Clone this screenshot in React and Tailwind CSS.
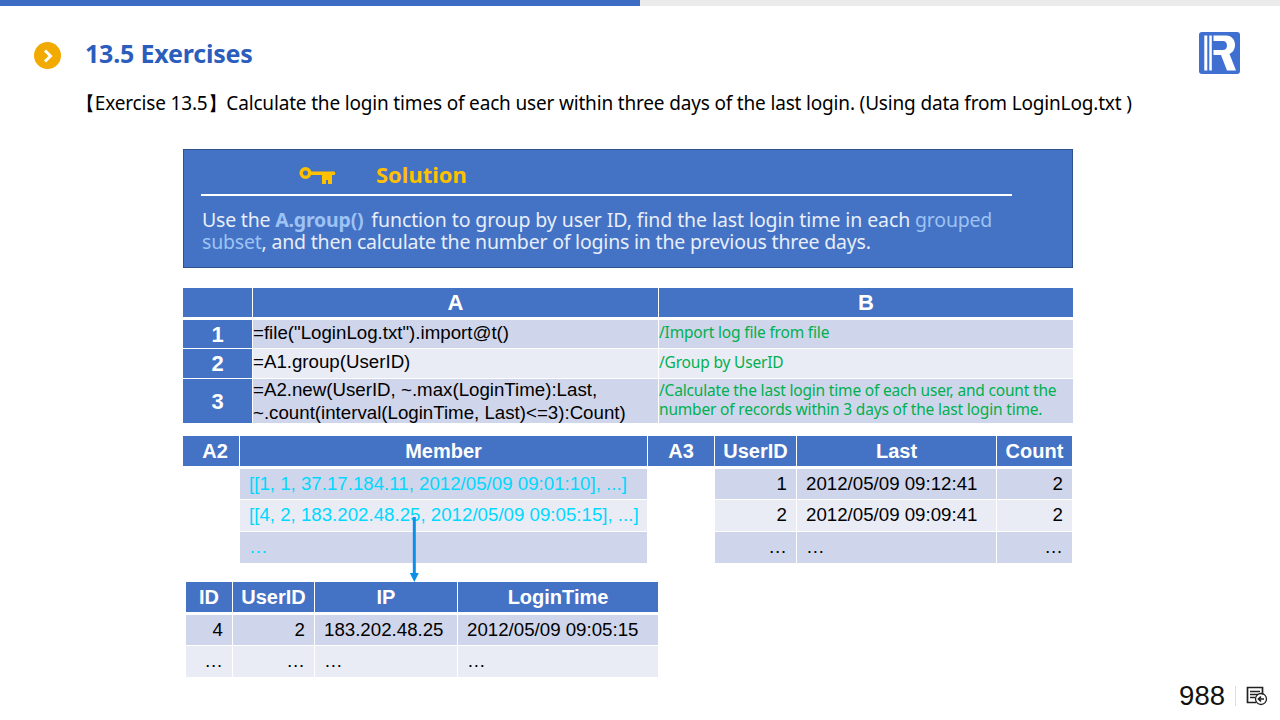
const uiFont = "font-['Noto_Sans','Open_Sans',sans-serif]";
const cellFont = "font-['Liberation_Sans',Arial,sans-serif]";

const Head = ({ children, className = "" }) => (
    <div className={`flex items-center justify-center bg-[#4472c4] text-[20px] font-bold text-white ${className}`}>{children}</div>
);

const Cell = ({ children, tone = "dark", right, className = "" }) => (
    <div
        className={`flex items-center text-[18.700px] leading-none text-black ${tone === "dark" ? "bg-[#cfd5ea]" : "bg-[#e9ebf5]"} ${right ? "justify-end pr-[9px]" : "pl-[9px]"} ${className}`}
    >
        {children}
    </div>
);

const Logo = () => (
    <svg width="41" height="42" viewBox="0 0 41 42">
        <rect x="0" y="0" width="41" height="42" rx="3" fill="#3f6fd0" />
        <rect x="5.300" y="3.500" width="3" height="35" fill="#fff" />
        <rect x="10.300" y="3.500" width="2.500" height="35" fill="#fff" />
        <path d="M14.500 3.500H27C33 3.500 36 8 36 13C36 17.500 33.500 20.500 30.500 22L37 38.500H28L22 23H14.500V18H24C26.500 18 28 16 28 13.500C28 11 26.500 9 24 9H14.500Z" fill="#fff" />
    </svg>
);

const Key = () => (
    <svg width="38" height="20" viewBox="0 0 38 20">
        <circle cx="6.500" cy="9" r="4.300" fill="none" stroke="#ffc000" strokeWidth="3.500" />
        <path d="M11 7.500H35.500L36.500 9.200L35.500 11H33V20H29V16H27V20H23V11H11Z" fill="#ffc000" />
    </svg>
);

const BackIcon = () => (
    <svg width="22" height="20" viewBox="0 0 22 20" fill="none" stroke="#222">
        <path d="M10 16.500H1.500V1.500h15v7" strokeWidth="1.700" />
        <path d="M4 5.500h10M4 8.500h8M4 11.500h5" strokeWidth="1.500" />
        <circle cx="15" cy="13" r="5.500" strokeWidth="1.300" />
        <path d="M18 13h-5M15 10.500 12.500 13l2.500 2.500" strokeWidth="1.700" />
    </svg>
);

const App = () => {
    return (
        <div className={`relative flex h-[720px] w-[1280px] flex-col overflow-hidden bg-white ${uiFont}`}>
            <div className="flex h-1.5 shrink-0 bg-[#ebebeb]">
                <div className="w-[640px] bg-[#3d6cc4]" />
            </div>

            <div className="mt-[26px] flex h-[42px] shrink-0 items-start pl-[34px] pr-[40px]">
                <div className="mt-[10px] flex size-[27px] items-center justify-center rounded-full bg-[#f2a900]">
                    <svg width="12" height="14" viewBox="0 0 12 14" fill="none" stroke="#fff" strokeWidth="3">
                        <path d="M3 1.500 8.500 7 3 12.500" />
                    </svg>
                </div>
                <h1 className="ml-6 mt-[5px] text-[25px] font-bold leading-[32px] tracking-[-0.2px] text-[#2b5dbd]">13.5 Exercises</h1>
                <div className="ml-auto"><Logo /></div>
            </div>

            <p className="ml-[76px] mt-[16px] h-[26px] whitespace-nowrap text-[19px] leading-[26px] tracking-[-0.17px] text-black">
                【Exercise 13.5】Calculate the login times of each user within three days of the last login. (Using data from LoginLog.txt )
            </p>

            <section className="ml-[183px] mt-[33px] h-[119px] w-[890px] shrink-0 border border-[#2f528f] bg-[#4472c4] px-[17px]">
                <div className="flex h-[44px] items-center pl-[98px] pt-1">
                    <Key />
                    <span className="ml-[39px] text-[22px] font-bold text-[#ffc000]">Solution</span>
                </div>
                <div className="h-0.5 w-[811px] bg-white" />
                <p className="mt-[13px] w-[850px] pl-px text-[19.500px] leading-[22px] tracking-[-0.2px] text-[#e8eef9]">
                    Use the <b className="mr-[3px] text-[#9dc3f5]">A.group()</b> <span className="tracking-[-0.09px]">function to group by user ID, find the last login time in each</span> <span className="text-[#9dc3f5]">grouped<br />subset</span>, and then calculate the number of logins in the previous three days.
                </p>
            </section>

            {/* code grid */}
            <div className={`ml-[183px] mt-5 grid w-[890px] shrink-0 grid-cols-[69px_405px_414px] grid-rows-[29px_1px_28px_29px_44px] gap-px ${cellFont}`}>
                <Head />
                <Head className="!text-[22px]">A</Head>
                <Head className="!text-[22px]">B</Head>
                <div className="col-span-3" />
                <Head className="!text-[22px]">1</Head>
                <Cell className="!pl-0 pb-px">=file("LoginLog.txt").import@t()</Cell>
                <Cell className={`!pl-0 pb-[3px] !text-[15.500px] tracking-[-0.18px] ${uiFont}`}><span className="text-[#00b050]">/Import log file from file</span></Cell>
                <Head className="!text-[22px]">2</Head>
                <Cell tone="light" className="!pl-0 pb-[2px]">=A1.group(UserID)</Cell>
                <Cell tone="light" className={`!pl-0 pb-[2px] !text-[15.500px] tracking-[-0.18px] ${uiFont}`}><span className="text-[#00b050]">/Group by UserID</span></Cell>
                <Head className="!text-[22px]">3</Head>
                <Cell className="!pl-0 !leading-[23px]">=A2.new(UserID, ~.max(LoginTime):Last,<br />~.count(interval(LoginTime, Last)&lt;=3):Count)</Cell>
                <Cell className={`!pl-0 pb-[2px] !text-[15.500px] !leading-[19px] tracking-[-0.18px] ${uiFont}`}>
                    <span className="whitespace-nowrap text-[#00b050]">/Calculate the last login time of each user, and count the<br />number of records within 3 days of the last login time.</span>
                </Cell>
            </div>

            {/* member and result */}
            <div className={`ml-[183px] mt-[13px] grid w-[889px] shrink-0 grid-cols-[56px_407px_66px_81px_199px_75px] grid-rows-[30px_1px_30px_31px_31px] gap-px ${cellFont}`}>
                <Head className="pl-2">A2</Head>
                <Head>Member</Head>
                <Head>A3</Head>
                <Head>UserID</Head>
                <Head>Last</Head>
                <Head>Count</Head>
                <div className="col-span-6" />
                <div />
                <Cell className="!text-[#00d8ff]">[[1, 1, 37.17.184.11, 2012/05/09 09:01:10], ...]</Cell>
                <div />
                <Cell right>1</Cell>
                <Cell>2012/05/09 09:12:41</Cell>
                <Cell right>2</Cell>
                <div />
                <Cell tone="light" className="!text-[#00d8ff]">[[4, 2, 183.202.48.25, 2012/05/09 09:05:15], ...]</Cell>
                <div />
                <Cell tone="light" right>2</Cell>
                <Cell tone="light">2012/05/09 09:09:41</Cell>
                <Cell tone="light" right>2</Cell>
                <div />
                <Cell className="!text-[#00d8ff]">…</Cell>
                <div />
                <Cell right>…</Cell>
                <Cell>…</Cell>
                <Cell right>…</Cell>
            </div>

            {/* member detail */}
            <div className={`ml-[186px] mt-[19px] grid w-[472px] shrink-0 grid-cols-[46px_81px_142px_200px] grid-rows-[30px_1px_30px_31px] gap-px ${cellFont}`}>
                <Head>ID</Head>
                <Head>UserID</Head>
                <Head>IP</Head>
                <Head>LoginTime</Head>
                <div className="col-span-4" />
                <Cell right>4</Cell>
                <Cell right>2</Cell>
                <Cell>183.202.48.25</Cell>
                <Cell>2012/05/09 09:05:15</Cell>
                <Cell tone="light" right>…</Cell>
                <Cell tone="light" right>…</Cell>
                <Cell tone="light">…</Cell>
                <Cell tone="light">…</Cell>
            </div>

            {/* arrow from member row to detail table */}
            <svg className="absolute left-[407px] top-[517px]" width="14" height="65" viewBox="0 0 14 65">
                <path d="M5.800 0h3v57h-3z" fill="#0b8fe8" />
                <path d="M2.800 56h9L7.300 65z" fill="#0b8fe8" />
            </svg>

            <div className={`absolute bottom-[8px] right-[12px] flex items-center ${cellFont}`}>
                <span className="text-[27.500px] leading-[32px] text-[#111]">988</span>
                <div className="mx-[10px] h-5 w-px bg-[#d5e0f2]" />
                <BackIcon />
            </div>
        </div>
    );
};

export default App;
